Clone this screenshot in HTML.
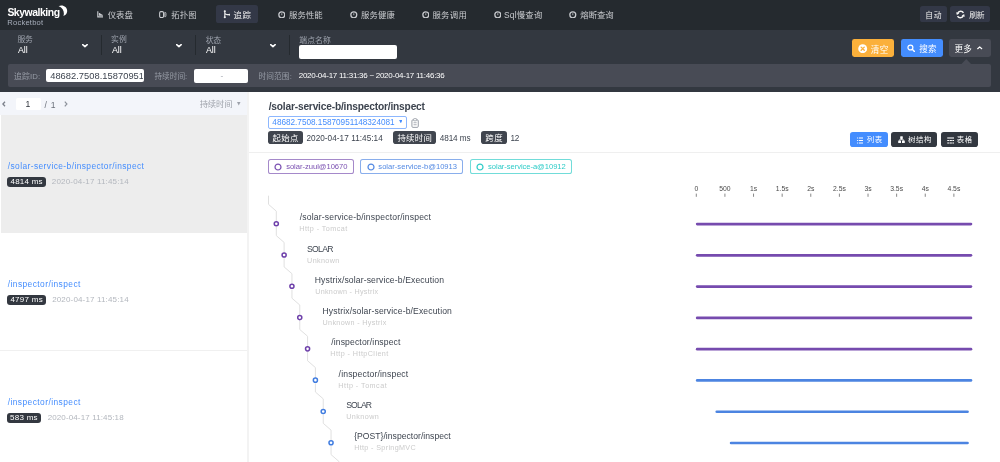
<!DOCTYPE html>
<html lang="zh-CN"><head><meta charset="utf-8"><title>SkyWalking Rocketbot - 追踪</title>
<style>
html,body{margin:0;padding:0}
body{width:1000px;height:462px;overflow:hidden;background:#fff;position:relative;font-family:"Liberation Sans", "Noto Sans CJK SC", sans-serif;-webkit-font-smoothing:antialiased}
#app{position:absolute;left:0;top:0;width:1000px;height:462px;overflow:hidden;background:#fff;will-change:transform}
.b{position:absolute;display:block}
.t{position:absolute;display:block;white-space:nowrap;line-height:1}
.hdr{left:0;top:0;width:1000px;height:30px;background:#252a2f}
.fbar,.left,.detail{left:0;top:0;width:0;height:0}
</style></head>
<body>
<div id="app">
<header class="b hdr">
<span class="t" id="t1" style="left:7.39px;top:8.30px;font-size:10.4px;color:#fff;font-weight:700;letter-spacing:-0.441px;">Skywalking</span>
<svg class="b" style="left:57.00px;top:5.00px;" width="11.00" height="12.00" viewBox="0 0 11 12"><path d="M1.6 1.2 C6 -0.8 10.8 2.4 10.1 6.8 C9.8 8.8 8.4 10.4 6.4 11.1 C7.2 9 7 6.6 5.8 4.6 C4.9 3 3.4 1.8 1.6 1.2 Z" fill="#fff"/></svg>
<span class="t" id="t2" style="left:7.36px;top:18.88px;font-size:7.6px;color:#a7aebb;letter-spacing:0.198px;">Rocketbot</span>
<svg class="b" style="left:96.60px;top:11.20px;" width="6.60" height="6.60" viewBox="0 0 11 11"><path d="M0.4 0.4H2.3V8.8H10.8V10.7H0.4Z" fill="#c9cbcf"/><path d="M3.2 3.2H5.6V4.8H7.8V6.2H9.8V8H3.2Z" fill="#c9cbcf"/></svg>
<span class="t" id="t3" style="left:107.63px;top:11.08px;font-size:8.4px;color:#c9cbcf;letter-spacing:0.120px;">仪表盘</span>
<svg class="b" style="left:159.40px;top:11.20px;" width="7.60" height="7.20" viewBox="0 0 12 11.4"><rect x="1" y="1" width="6.2" height="9.4" rx="2" fill="none" stroke="#c9cbcf" stroke-width="1.7"/><path d="M9.1 2.2H9.6Q11 2.2 11 3.8V7.6Q11 9.2 9.6 9.2H9.1Z" fill="none" stroke="#c9cbcf" stroke-width="1.3"/></svg>
<span class="t" id="t4" style="left:171.17px;top:11.08px;font-size:8.4px;color:#c9cbcf;letter-spacing:0.190px;">拓扑图</span>
<div class="b" style="left:216.30px;top:4.80px;width:41.70px;height:18.30px;background:#333847;border-radius:2.6px;"></div>
<svg class="b" style="left:222.60px;top:10.40px;" width="7.60" height="8.40" viewBox="0 0 11 12"><path d="M2.6 1V11M2.6 4.2Q3 6.6 6 6.6H10.2" stroke="#eceded" stroke-width="1.6" fill="none"/><circle cx="2.6" cy="1.7" r="1.5" fill="#eceded"/><circle cx="2.6" cy="10.3" r="1.5" fill="#eceded"/><circle cx="9.4" cy="6.6" r="1.3" fill="#eceded"/></svg>
<span class="t" id="t5" style="left:233.50px;top:10.98px;font-size:8.4px;color:#f2f2f3;letter-spacing:0.693px;">追踪</span>
<svg class="b" style="left:277.60px;top:10.60px;" width="7.60" height="7.60" viewBox="0 0 12 12"><circle cx="6" cy="6" r="4.7" fill="none" stroke="#c9cbcf" stroke-width="2.0"/><path d="M6 3.6V6.6" stroke="#c9cbcf" stroke-width="1.3" fill="none"/></svg>
<span class="t" id="t6" style="left:289.10px;top:11.08px;font-size:8.4px;color:#c9cbcf;letter-spacing:0.048px;">服务性能</span>
<svg class="b" style="left:350.00px;top:10.60px;" width="7.60" height="7.60" viewBox="0 0 12 12"><circle cx="6" cy="6" r="4.7" fill="none" stroke="#c9cbcf" stroke-width="2.0"/><path d="M6 3.6V6.6" stroke="#c9cbcf" stroke-width="1.3" fill="none"/></svg>
<span class="t" id="t7" style="left:361.09px;top:11.08px;font-size:8.4px;color:#c9cbcf;letter-spacing:0.106px;">服务健康</span>
<svg class="b" style="left:421.60px;top:10.60px;" width="7.60" height="7.60" viewBox="0 0 12 12"><circle cx="6" cy="6" r="4.7" fill="none" stroke="#c9cbcf" stroke-width="2.0"/><path d="M6 3.6V6.6" stroke="#c9cbcf" stroke-width="1.3" fill="none"/></svg>
<span class="t" id="t8" style="left:432.45px;top:11.08px;font-size:8.4px;color:#c9cbcf;letter-spacing:0.311px;">服务调用</span>
<svg class="b" style="left:493.60px;top:10.60px;" width="7.60" height="7.60" viewBox="0 0 12 12"><circle cx="6" cy="6" r="4.7" fill="none" stroke="#c9cbcf" stroke-width="2.0"/><path d="M6 3.6V6.6" stroke="#c9cbcf" stroke-width="1.3" fill="none"/></svg>
<span class="t" id="t9" style="left:504.04px;top:11.08px;font-size:8.4px;color:#c9cbcf;letter-spacing:0.205px;">Sql慢查询</span>
<svg class="b" style="left:569.40px;top:10.60px;" width="7.60" height="7.60" viewBox="0 0 12 12"><circle cx="6" cy="6" r="4.7" fill="none" stroke="#c9cbcf" stroke-width="2.0"/><path d="M6 3.6V6.6" stroke="#c9cbcf" stroke-width="1.3" fill="none"/></svg>
<span class="t" id="t10" style="left:580.30px;top:11.08px;font-size:8.4px;color:#c9cbcf;letter-spacing:-0.044px;">熔断查询</span>
<div class="b" style="left:919.50px;top:5.70px;width:27.60px;height:16.30px;background:#333847;border-radius:2.6px;"></div>
<span class="t" id="t11" style="left:925.23px;top:11.93px;font-size:7.8px;color:#eee;letter-spacing:0.691px;">自动</span>
<div class="b" style="left:950.10px;top:5.70px;width:40.40px;height:16.30px;background:#333847;border-radius:2.6px;"></div>
<svg class="b" style="left:956.20px;top:10.00px;" width="9.00" height="9.00" viewBox="0 0 14 14"><path d="M11.6 4.6A5 5 0 0 0 2.6 5" stroke="#f4f4f4" stroke-width="2.2" fill="none"/><path d="M2.4 9.4A5 5 0 0 0 11.4 9" stroke="#f4f4f4" stroke-width="2.2" fill="none"/><path d="M0.2 3.4L1.4 7.6L5.2 5.2Z" fill="#f4f4f4"/><path d="M13.8 10.6L12.6 6.4L8.8 8.8Z" fill="#f4f4f4"/></svg>
<span class="t" id="t12" style="left:969.15px;top:11.98px;font-size:7.8px;color:#eee;letter-spacing:-0.142px;">刷新</span>
</header>
<section class="b fbar">
<div class="b" style="left:0.00px;top:30.00px;width:1000.00px;height:62.40px;background:#333840;"></div>
<span class="t" id="t13" style="left:17.54px;top:35.58px;font-size:7.8px;color:#9ea3ad;letter-spacing:-0.330px;">服务</span>
<span class="t" id="t14" style="left:17.93px;top:46.14px;font-size:8.9px;color:#fff;">All</span>
<svg class="b" style="left:82.20px;top:44.28px;" width="5.90" height="3.65" viewBox="0 0 5.9 3.65"><path d="M0.7 0.6L2.95 2.65L5.20 0.6" stroke="#fff" stroke-width="1.5" fill="none" stroke-linecap="round" stroke-linejoin="round"/></svg>
<div class="b" style="left:100.50px;top:35.00px;width:1.20px;height:20.00px;background:#252a2f;"></div>
<span class="t" id="t15" style="left:111.12px;top:35.58px;font-size:7.8px;color:#9ea3ad;letter-spacing:0.143px;">实例</span>
<span class="t" id="t16" style="left:111.93px;top:46.14px;font-size:8.9px;color:#fff;">All</span>
<svg class="b" style="left:176.20px;top:44.28px;" width="5.90" height="3.65" viewBox="0 0 5.9 3.65"><path d="M0.7 0.6L2.95 2.65L5.20 0.6" stroke="#fff" stroke-width="1.5" fill="none" stroke-linecap="round" stroke-linejoin="round"/></svg>
<div class="b" style="left:194.50px;top:35.00px;width:1.20px;height:20.00px;background:#252a2f;"></div>
<span class="t" id="t17" style="left:205.68px;top:36.58px;font-size:7.8px;color:#9ea3ad;letter-spacing:-0.107px;">状态</span>
<span class="t" id="t18" style="left:205.93px;top:46.14px;font-size:8.9px;color:#fff;">All</span>
<svg class="b" style="left:270.20px;top:44.28px;" width="5.90" height="3.65" viewBox="0 0 5.9 3.65"><path d="M0.7 0.6L2.95 2.65L5.20 0.6" stroke="#fff" stroke-width="1.5" fill="none" stroke-linecap="round" stroke-linejoin="round"/></svg>
<div class="b" style="left:288.50px;top:35.00px;width:1.20px;height:20.00px;background:#252a2f;"></div>
<span class="t" id="t19" style="left:299.35px;top:36.75px;font-size:7.8px;color:#9ea3ad;letter-spacing:0.089px;">端点名称</span>
<div class="b" style="left:299.40px;top:45.40px;width:98.10px;height:13.20px;background:#fff;border-radius:2px;"></div>
<div class="b" style="left:852.10px;top:39.40px;width:42.20px;height:17.40px;background:#fbb03b;border-radius:2.4px;"></div>
<svg class="b" style="left:858.20px;top:43.60px;" width="9.40" height="9.40" viewBox="0 0 12 12"><circle cx="6" cy="6" r="5.7" fill="#fff"/><path d="M4 4L8 8M8 4L4 8" stroke="#fbb03b" stroke-width="1.7" stroke-linecap="round"/></svg>
<span class="t" id="t20" style="left:870.82px;top:45.96px;font-size:8.6px;color:#fff;letter-spacing:0.435px;">清空</span>
<div class="b" style="left:900.80px;top:39.40px;width:42.00px;height:17.40px;background:#448dfe;border-radius:2.4px;"></div>
<svg class="b" style="left:907.00px;top:43.90px;" width="8.20" height="8.40" viewBox="0 0 12 12"><circle cx="5" cy="5" r="3.6" fill="none" stroke="#fff" stroke-width="1.8"/><path d="M7.7 7.7L11 11" stroke="#fff" stroke-width="2" stroke-linecap="round"/></svg>
<span class="t" id="t21" style="left:919.30px;top:44.79px;font-size:8.6px;color:#fff;letter-spacing:0.131px;">搜索</span>
<div class="b" style="left:949.00px;top:39.40px;width:41.70px;height:17.40px;background:#484b55;border-radius:2.4px;"></div>
<span class="t" id="t22" style="left:954.50px;top:45.37px;font-size:8.6px;color:#fff;letter-spacing:0.207px;">更多</span>
<svg class="b" style="left:977.20px;top:46.22px;" width="5.40" height="3.37" viewBox="0 0 5.4 3.37"><path d="M0.7 2.67L2.70 0.9L4.70 2.67" stroke="#fff" stroke-width="1.25" fill="none" stroke-linecap="round" stroke-linejoin="round"/></svg>
<svg class="b" style="left:960.50px;top:59.00px;" width="10.50" height="5.60" viewBox="0 0 10.5 5.6"><path d="M0 5.6L5.25 0L10.5 5.6Z" fill="#484b55"/></svg>
<div class="b" style="left:8.00px;top:64.40px;width:982.60px;height:23.00px;background:#484b55;border-radius:2px;"></div>
<span class="t" id="t23" style="left:14.08px;top:72.84px;font-size:7.8px;color:#979ca6;letter-spacing:0.122px;">追踪ID:</span>
<div class="b" style="left:46.40px;top:68.60px;width:98.00px;height:13.80px;background:#fff;border-radius:2px;overflow:hidden;"></div>
<div class="b" style="left:46.4px;top:68.6px;width:96.8px;height:13.8px;overflow:hidden">
<span class="t" id="t24" style="left:3.80px;top:3.24px;font-size:9.3px;color:#3d444f;letter-spacing:0.04px;">48682.7508.15870951148324081</span>
</div>
<span class="t" id="t25" style="left:154.43px;top:72.91px;font-size:7.7px;color:#979ca6;letter-spacing:-0.032px;">持续时间:</span>
<div class="b" style="left:194.00px;top:68.60px;width:54.40px;height:14.00px;background:#fff;border-radius:2px;"></div>
<span class="t" id="t26" style="left:220.58px;top:71.88px;font-size:8.4px;color:#b0b4bc;">-</span>
<span class="t" id="t27" style="left:258.43px;top:72.92px;font-size:7.7px;color:#979ca6;letter-spacing:0.124px;">时间范围:</span>
<span class="t" id="t28" style="left:298.71px;top:71.88px;font-size:8.0px;color:#fff;letter-spacing:-0.262px;">2020-04-17 11:31:36 ~ 2020-04-17 11:46:36</span>
</section>
<aside class="b left">
<div class="b" style="left:0.00px;top:92.00px;width:247.40px;height:22.60px;background:#f3f5fa;"></div>
<svg class="b" style="left:2.40px;top:101.00px;" width="3.80" height="6.00" viewBox="0 0 3.8 6"><path d="M3 0.7L0.9 3L3 5.3" stroke="#7c818b" stroke-width="1.3" fill="none"/></svg>
<div class="b" style="left:15.60px;top:97.90px;width:25.20px;height:12.10px;background:#fff;border-radius:1.5px;"></div>
<span class="t" id="t29" style="left:25.45px;top:99.99px;font-size:8.6px;color:#2f343c;">1</span>
<span class="t" id="t30" style="left:44.56px;top:100.60px;font-size:8.6px;color:#6b707a;letter-spacing:0.699px;">/ 1</span>
<svg class="b" style="left:64.40px;top:101.00px;" width="3.80" height="6.00" viewBox="0 0 3.8 6"><path d="M0.8 0.7L2.9 3L0.8 5.3" stroke="#8d929b" stroke-width="1.2" fill="none"/></svg>
<span class="t" id="t31" style="left:199.64px;top:100.23px;font-size:8.3px;color:#9fa3ab;letter-spacing:-0.065px;">持续时间</span>
<svg class="b" style="left:237.00px;top:102.10px;" width="3.50" height="3.60" viewBox="0 0 3.5 3.6"><path d="M0 0H3.5L1.75 3.6Z" fill="#9da1aa"/></svg>
<div class="b" style="left:1.00px;top:114.50px;width:246.40px;height:118.00px;background:#ededed;"></div>
<span class="t" id="t32" style="left:7.71px;top:161.98px;font-size:8.4px;color:#448dfe;letter-spacing:0.419px;">/solar-service-b/inspector/inspect</span>
<div class="b" style="left:7.10px;top:176.70px;width:38.60px;height:10.10px;background:#333840;border-radius:3px;"></div>
<span class="t" id="t33" style="left:10.51px;top:177.78px;font-size:8.0px;color:#fff;letter-spacing:0.224px;">4814 ms</span>
<span class="t" id="t34" style="left:51.86px;top:177.98px;font-size:8.0px;color:#b3b7be;letter-spacing:0.172px;">2020-04-17 11:45:14</span>
<div class="b" style="left:0.00px;top:232.50px;width:247.40px;height:118.00px;background:#fff;border-bottom:1px solid #f0f0f0;box-sizing:border-box;"></div>
<span class="t" id="t35" style="left:7.72px;top:279.96px;font-size:8.4px;color:#448dfe;letter-spacing:0.438px;">/inspector/inspect</span>
<div class="b" style="left:7.10px;top:294.70px;width:38.60px;height:10.10px;background:#333840;border-radius:3px;"></div>
<span class="t" id="t36" style="left:10.38px;top:295.78px;font-size:8.0px;color:#fff;letter-spacing:0.265px;">4797 ms</span>
<span class="t" id="t37" style="left:52.15px;top:295.98px;font-size:8.0px;color:#b3b7be;letter-spacing:0.155px;">2020-04-17 11:45:14</span>
<div class="b" style="left:0.00px;top:350.50px;width:247.40px;height:118.00px;background:#fff;border-bottom:1px solid #f0f0f0;box-sizing:border-box;"></div>
<span class="t" id="t38" style="left:7.66px;top:397.96px;font-size:8.4px;color:#448dfe;letter-spacing:0.442px;">/inspector/inspect</span>
<div class="b" style="left:7.10px;top:412.70px;width:33.60px;height:10.10px;background:#333840;border-radius:3px;"></div>
<span class="t" id="t39" style="left:10.12px;top:413.78px;font-size:8.0px;color:#fff;letter-spacing:0.252px;">583 ms</span>
<span class="t" id="t40" style="left:47.63px;top:413.98px;font-size:8.0px;color:#b3b7be;letter-spacing:0.126px;">2020-04-17 11:45:18</span>
<div class="b" style="left:247.40px;top:92.00px;width:1.40px;height:370.00px;background:#f3f3f3;"></div>
</aside>
<main class="b detail">
<span class="t" id="t41" style="left:268.64px;top:102.00px;font-size:10.2px;color:#3d444f;font-weight:700;letter-spacing:-0.186px;">/solar-service-b/inspector/inspect</span>
<div class="b" style="left:268.00px;top:115.80px;width:138.70px;height:12.80px;background:#fff;border-radius:2px;border:1px solid #8db7fe;box-sizing:border-box;"></div>
<span class="t" id="t42" style="left:272.33px;top:118.87px;font-size:8.2px;color:#448dfe;letter-spacing:-0.002px;">48682.7508.15870951148324081</span>
<svg class="b" style="left:398.50px;top:119.90px;" width="3.60" height="3.40" viewBox="0 0 3.6 3.6"><path d="M0 0H3.6L1.8 3.6Z" fill="#448dfe"/></svg>
<svg class="b" style="left:410.80px;top:117.80px;" width="8.20" height="10.00" viewBox="0 0 9 11"><rect x="1" y="2" width="7" height="8.3" rx="1.2" fill="none" stroke="#9a9fa8" stroke-width="1.1"/><rect x="2.8" y="0.7" width="3.4" height="2.4" rx="0.6" fill="#fff" stroke="#9a9fa8" stroke-width="0.9"/><path d="M2.8 5.2H6.2M2.8 7.4H6.2" stroke="#9a9fa8" stroke-width="0.9"/></svg>
<div class="b" style="left:268.20px;top:131.30px;width:34.40px;height:12.60px;background:#40454e;border-radius:2.8px;"></div>
<span class="t" id="t43" style="left:272.53px;top:133.68px;font-size:8.4px;color:#fff;letter-spacing:0.372px;">起始点</span>
<span class="t" id="t44" style="left:306.45px;top:134.57px;font-size:8.2px;color:#3d444f;letter-spacing:0.049px;">2020-04-17 11:45:14</span>
<div class="b" style="left:393.40px;top:131.30px;width:42.30px;height:12.60px;background:#40454e;border-radius:2.8px;"></div>
<span class="t" id="t45" style="left:397.48px;top:133.68px;font-size:8.4px;color:#fff;letter-spacing:0.266px;">持续时间</span>
<span class="t" id="t46" style="left:439.76px;top:134.59px;font-size:8.2px;color:#3d444f;letter-spacing:-0.111px;">4814 ms</span>
<div class="b" style="left:481.00px;top:131.30px;width:26.20px;height:12.60px;background:#40454e;border-radius:2.8px;"></div>
<span class="t" id="t47" style="left:485.36px;top:133.68px;font-size:8.4px;color:#fff;letter-spacing:0.391px;">跨度</span>
<span class="t" id="t48" style="left:510.43px;top:134.57px;font-size:8.2px;color:#3d444f;letter-spacing:-0.257px;">12</span>
<div class="b" style="left:850.10px;top:131.50px;width:38.00px;height:15.30px;background:#448dfe;border-radius:2.8px;"></div>
<svg class="b" style="left:856.60px;top:136.60px;" width="6.60" height="7.00" viewBox="0 0 6.4 7"><path d="M1.8 1H6.4M1.8 3.5H6.4M1.8 6H6.4" stroke="#fff" stroke-width="1"/><path d="M0 1H1M0 3.5H1M0 6H1" stroke="#fff" stroke-width="1"/></svg>
<span class="t" id="t49" style="left:866.64px;top:135.87px;font-size:7.4px;color:#fff;letter-spacing:0.662px;">列表</span>
<div class="b" style="left:891.40px;top:131.50px;width:45.60px;height:15.30px;background:#333840;border-radius:2.8px;"></div>
<svg class="b" style="left:897.80px;top:136.10px;" width="7.00" height="7.40" viewBox="0 0 7 7.4"><rect x="2.2" y="0.3" width="2.6" height="2.6" rx="0.4" fill="#fff"/><rect x="0.2" y="4.4" width="2.8" height="2.8" rx="0.4" fill="#fff"/><rect x="4" y="4.4" width="2.8" height="2.8" rx="0.4" fill="#fff"/><path d="M3.5 2.5V3.7M1.6 4.6V3.7H5.4V4.6" stroke="#fff" stroke-width="0.8" fill="none"/></svg>
<span class="t" id="t50" style="left:908.00px;top:135.87px;font-size:7.4px;color:#fff;letter-spacing:0.640px;">树结构</span>
<div class="b" style="left:940.80px;top:131.50px;width:36.80px;height:15.30px;background:#333840;border-radius:2.8px;"></div>
<svg class="b" style="left:946.50px;top:136.50px;" width="7.70" height="7.00" viewBox="0 0 7.2 7"><path d="M0 1H7.2" stroke="#fff" stroke-width="1.1"/><path d="M0 3.5H7.2M0 6H7.2" stroke="#fff" stroke-width="1" stroke-dasharray="2.1 0.45"/></svg>
<span class="t" id="t51" style="left:956.66px;top:135.87px;font-size:7.4px;color:#fff;letter-spacing:0.600px;">表格</span>
<div class="b" style="left:248.80px;top:152.00px;width:751.20px;height:1.00px;background:#efefef;"></div>
<div class="b" style="left:268.00px;top:159.30px;width:86.30px;height:14.80px;background:#fff;border-radius:2.6px;border:1px solid rgba(110,64,170,.62);box-sizing:border-box;"></div>
<svg class="b" style="left:274.30px;top:162.80px;" width="8.00" height="8.00" viewBox="0 0 8 8"><circle cx="4" cy="4" r="2.95" fill="#fff" stroke="#6e40aa" stroke-width="1.3" opacity=".9"/></svg>
<span class="t" id="t52" style="left:286.15px;top:163.08px;font-size:7.6px;color:#6e40aa;letter-spacing:-0.027px;opacity:.92;">solar-zuul@10670</span>
<div class="b" style="left:360.30px;top:159.30px;width:102.70px;height:14.80px;background:#fff;border-radius:2.6px;border:1px solid rgba(65,125,224,.62);box-sizing:border-box;"></div>
<svg class="b" style="left:366.50px;top:162.80px;" width="8.00" height="8.00" viewBox="0 0 8 8"><circle cx="4" cy="4" r="2.95" fill="#fff" stroke="#417de0" stroke-width="1.3" opacity=".9"/></svg>
<span class="t" id="t53" style="left:378.34px;top:163.08px;font-size:7.6px;color:#417de0;letter-spacing:0.005px;opacity:.92;">solar-service-b@10913</span>
<div class="b" style="left:469.60px;top:159.30px;width:102.20px;height:14.80px;background:#fff;border-radius:2.6px;border:1px solid rgba(26,199,194,.62);box-sizing:border-box;"></div>
<svg class="b" style="left:475.80px;top:162.80px;" width="8.00" height="8.00" viewBox="0 0 8 8"><circle cx="4" cy="4" r="2.95" fill="#fff" stroke="#1ac7c2" stroke-width="1.3" opacity=".9"/></svg>
<span class="t" id="t54" style="left:488.08px;top:163.08px;font-size:7.6px;color:#1ac7c2;letter-spacing:-0.050px;opacity:.92;">solar-service-a@10912</span>
<svg class="b chart" style="left:0;top:0" width="1000" height="462" viewBox="0 0 1000 462" font-family='Liberation Sans, Noto Sans CJK SC, sans-serif'><path d="M696.30 193.6V196.8" stroke="#555" stroke-width="0.7"/><text x="696.30" y="190.8" text-anchor="middle" font-size="6.8" fill="#4a4a4a">0</text><path d="M724.92 193.6V196.8" stroke="#555" stroke-width="0.7"/><text x="724.92" y="190.8" text-anchor="middle" font-size="6.8" fill="#4a4a4a">500</text><path d="M753.54 193.6V196.8" stroke="#555" stroke-width="0.7"/><text x="753.54" y="190.8" text-anchor="middle" font-size="6.8" fill="#4a4a4a">1s</text><path d="M782.16 193.6V196.8" stroke="#555" stroke-width="0.7"/><text x="782.16" y="190.8" text-anchor="middle" font-size="6.8" fill="#4a4a4a">1.5s</text><path d="M810.78 193.6V196.8" stroke="#555" stroke-width="0.7"/><text x="810.78" y="190.8" text-anchor="middle" font-size="6.8" fill="#4a4a4a">2s</text><path d="M839.40 193.6V196.8" stroke="#555" stroke-width="0.7"/><text x="839.40" y="190.8" text-anchor="middle" font-size="6.8" fill="#4a4a4a">2.5s</text><path d="M868.02 193.6V196.8" stroke="#555" stroke-width="0.7"/><text x="868.02" y="190.8" text-anchor="middle" font-size="6.8" fill="#4a4a4a">3s</text><path d="M896.64 193.6V196.8" stroke="#555" stroke-width="0.7"/><text x="896.64" y="190.8" text-anchor="middle" font-size="6.8" fill="#4a4a4a">3.5s</text><path d="M925.26 193.6V196.8" stroke="#555" stroke-width="0.7"/><text x="925.26" y="190.8" text-anchor="middle" font-size="6.8" fill="#4a4a4a">4s</text><path d="M953.88 193.6V196.8" stroke="#555" stroke-width="0.7"/><text x="953.88" y="190.8" text-anchor="middle" font-size="6.8" fill="#4a4a4a">4.5s</text><path d="M268.50 195.67V204.35L276.30 211.15V221.75 M276.30 226.95V235.63L284.12 242.43V253.03 M284.12 258.23V266.91L291.94 273.71V284.31 M291.94 289.51V298.19L299.76 304.99V315.59 M299.76 320.79V329.47L307.58 336.27V346.87 M307.58 352.07V360.75L315.40 367.55V378.15 M315.40 383.35V392.03L323.22 398.83V409.43 M323.22 414.63V423.31L331.04 430.11V440.71 M331.04 445.91V454.59L338.86 461.39V471.99" fill="none" stroke="#e0e0e0" stroke-width="1"/><circle cx="276.30" cy="223.75" r="2.05" fill="#fff" stroke="#6e40aa" stroke-width="1.5"/><path d="M697.20 224.05H970.95" stroke="#6e40aa" stroke-width="2.7" stroke-linecap="round" opacity=".94"/><circle cx="284.12" cy="255.03" r="2.05" fill="#fff" stroke="#6e40aa" stroke-width="1.5"/><path d="M697.20 255.33H970.95" stroke="#6e40aa" stroke-width="2.7" stroke-linecap="round" opacity=".94"/><circle cx="291.94" cy="286.31" r="2.05" fill="#fff" stroke="#6e40aa" stroke-width="1.5"/><path d="M697.20 286.61H970.95" stroke="#6e40aa" stroke-width="2.7" stroke-linecap="round" opacity=".94"/><circle cx="299.76" cy="317.59" r="2.05" fill="#fff" stroke="#6e40aa" stroke-width="1.5"/><path d="M697.20 317.89H970.95" stroke="#6e40aa" stroke-width="2.7" stroke-linecap="round" opacity=".94"/><circle cx="307.58" cy="348.87" r="2.05" fill="#fff" stroke="#6e40aa" stroke-width="1.5"/><path d="M697.20 349.17H970.95" stroke="#6e40aa" stroke-width="2.7" stroke-linecap="round" opacity=".94"/><circle cx="315.40" cy="380.15" r="2.05" fill="#fff" stroke="#417de0" stroke-width="1.5"/><path d="M697.20 380.45H970.95" stroke="#417de0" stroke-width="2.7" stroke-linecap="round" opacity=".94"/><circle cx="323.22" cy="411.43" r="2.05" fill="#fff" stroke="#417de0" stroke-width="1.5"/><path d="M716.78 411.73H967.52" stroke="#417de0" stroke-width="2.7" stroke-linecap="round" opacity=".94"/><circle cx="331.04" cy="442.71" r="2.05" fill="#fff" stroke="#417de0" stroke-width="1.5"/><path d="M731.09 443.01H967.52" stroke="#417de0" stroke-width="2.7" stroke-linecap="round" opacity=".94"/><circle cx="338.86" cy="473.99" r="2.05" fill="#fff" stroke="#417de0" stroke-width="1.5"/><path d="M731.94 474.29H964.43" stroke="#417de0" stroke-width="2.7" stroke-linecap="round" opacity=".94"/></svg>
<span class="t" id="t55" style="left:299.82px;top:213.00px;font-size:8.6px;color:#3d444f;letter-spacing:0.168px;">/solar-service-b/inspector/inspect</span>
<span class="t" id="t56" style="left:299.24px;top:225.00px;font-size:7.2px;color:#cbcbcb;letter-spacing:0.451px;">Http - Tomcat</span>
<span class="t" id="t57" style="left:307.05px;top:245.00px;font-size:8.6px;color:#3d444f;letter-spacing:-0.686px;">SOLAR</span>
<span class="t" id="t58" style="left:307.11px;top:257.00px;font-size:7.2px;color:#cbcbcb;letter-spacing:0.350px;">Unknown</span>
<span class="t" id="t59" style="left:314.78px;top:276.00px;font-size:8.6px;color:#3d444f;letter-spacing:0.126px;">Hystrix/solar-service-b/Execution</span>
<span class="t" id="t60" style="left:315.18px;top:288.00px;font-size:7.2px;color:#cbcbcb;letter-spacing:0.294px;">Unknown - Hystrix</span>
<span class="t" id="t61" style="left:322.47px;top:307.00px;font-size:8.6px;color:#3d444f;letter-spacing:0.134px;">Hystrix/solar-service-b/Execution</span>
<span class="t" id="t62" style="left:322.59px;top:319.00px;font-size:7.2px;color:#cbcbcb;letter-spacing:0.336px;">Unknown - Hystrix</span>
<span class="t" id="t63" style="left:331.16px;top:338.00px;font-size:8.6px;color:#3d444f;letter-spacing:0.141px;">/inspector/inspect</span>
<span class="t" id="t64" style="left:330.27px;top:350.00px;font-size:7.2px;color:#cbcbcb;letter-spacing:0.429px;">Http - HttpClient</span>
<span class="t" id="t65" style="left:338.59px;top:370.00px;font-size:8.6px;color:#3d444f;letter-spacing:0.160px;">/inspector/inspect</span>
<span class="t" id="t66" style="left:338.29px;top:382.00px;font-size:7.2px;color:#cbcbcb;letter-spacing:0.479px;">Http - Tomcat</span>
<span class="t" id="t67" style="left:346.15px;top:401.00px;font-size:8.6px;color:#3d444f;letter-spacing:-0.815px;">SOLAR</span>
<span class="t" id="t68" style="left:346.24px;top:413.00px;font-size:7.2px;color:#cbcbcb;letter-spacing:0.426px;">Unknown</span>
<span class="t" id="t69" style="left:354.20px;top:432.00px;font-size:8.6px;color:#3d444f;letter-spacing:0.023px;">{POST}/inspector/inspect</span>
<span class="t" id="t70" style="left:354.15px;top:444.00px;font-size:7.2px;color:#cbcbcb;letter-spacing:0.349px;">Http - SpringMVC</span>
<span class="t" id="t71" style="left:361.76px;top:463.00px;font-size:8.6px;color:#3d444f;">/inspector/inspect</span>
<span class="t" id="t72" style="left:361.76px;top:475.00px;font-size:7.2px;color:#cbcbcb;">Http - HttpClient</span>
</main>
</div>
</body></html>
